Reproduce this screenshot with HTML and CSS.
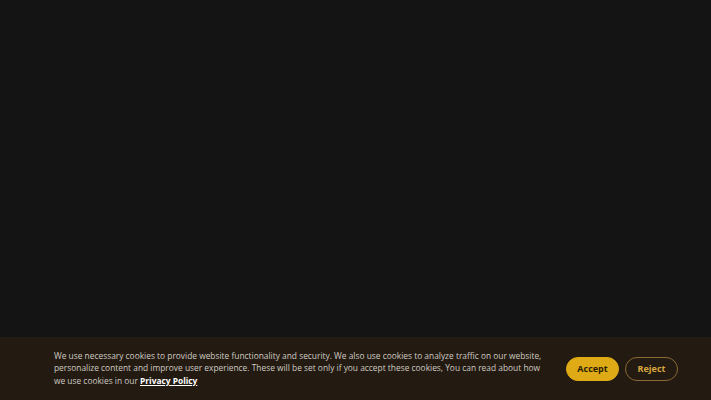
FILE: index.html
```html
<!DOCTYPE html>
<html lang="en">
<head>
<meta charset="utf-8">
<title>Cookies</title>
<link rel="stylesheet" href="styles.css">
</head>
<body>
<main class="page"></main>
<div class="cookie-banner">
  <p class="cookie-text">We use necessary cookies to provide website functionality and security. We also use cookies to analyze traffic on our website, personalize content and improve user experience. These will be set only if you accept these cookies, You can read about how we use cookies in our <a href="#" class="cookie-link">Privacy Policy</a></p>
  <div class="cookie-actions">
    <button class="btn btn-accept">Accept</button>
    <button class="btn btn-reject">Reject</button>
  </div>
</div>
</body>
</html>
```
FILE: styles.css
```css
html, body {
  margin: 0;
  padding: 0;
  height: 100%;
}
body {
  background: #141414;
  font-family: "Open Sans", "Noto Sans", sans-serif;
  display: flex;
  flex-direction: column;
  overflow: hidden;
}
.page {
  flex: 1;
}
.cookie-banner {
  height: 63px;
  box-sizing: border-box;
  background: #231b11;
  display: flex;
  align-items: center;
  padding: 0 33px 0 54px;
}
.cookie-text {
  margin: 0;
  width: 492px;
  color: #cfcac3;
  font-size: 8.4px;
  line-height: 12.5px;
}
.cookie-link {
  color: #ffffff;
  font-weight: 700;
  text-decoration: underline;
}
.cookie-actions {
  margin-left: auto;
  display: flex;
  gap: 6px;
}
.btn {
  height: 24px;
  border-radius: 12px;
  font-family: "Open Sans", sans-serif;
  font-weight: 700;
  font-size: 9px;
  padding: 0;
  width: 53px;
  cursor: pointer;
}
.btn-accept {
  background: #deaa16;
  color: #2a1e08;
  border: 1px solid #deaa16;
}
.btn-reject {
  background: transparent;
  color: #d9a640;
  border: 1px solid #8a6a33;
}
```
